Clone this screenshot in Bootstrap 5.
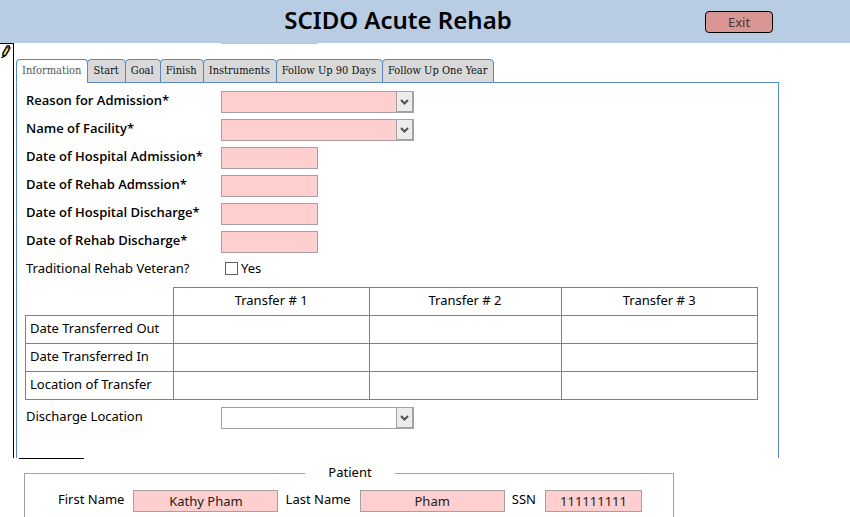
<!DOCTYPE html>
<html lang="en">
<head>
<meta charset="utf-8">
<meta name="viewport" content="width=device-width, initial-scale=1">
<title>SCIDO Acute Rehab</title>
<link href="https://cdn.jsdelivr.net/npm/bootstrap@5.3.0/dist/css/bootstrap.min.css" rel="stylesheet">
<style>
  :root { --line: #5b88bd; --field-line: #a6a0a2; --pink: #ffcfcf; }
  body { font-family: "Noto Sans", "Open Sans", sans-serif; font-size: 13px; line-height: 18px; color: #000; }
  .app-bar { background: #b8cce4; min-height: 43px; padding-left: 91px; padding-right: 77px; }
  .app-title { font-size: 24px; line-height: 36px; font-weight: 600; color: #000; padding-bottom: 4px; }
  .exit-btn { width: 68px; padding: 0; border: 1px solid #000; border-radius: 4px; background: #d99694; color: #4c3534; font-size: 13px; line-height: 20px; }
  .record-strip { width: 14px; border: solid #000; border-width: 1px 1px 0 0; }
  .form-area { padding: 0 71px 0 2px; }
  .scrolled-field { width: 97px; height: 1px; margin: 0 0 15px 205px; background: #d3bcc8; }
  .form-tabs { border: 0; margin-bottom: -1px; }
  .form-tabs .nav-item + .nav-item { margin-left: -1px; }
  .form-tabs .nav-link { height: 24px; margin: 0; padding: 0 6px 0 5px; border: 1px solid var(--line); border-radius: 4px 4px 0 0; background: #d9d9d9; color: #111; font-family: "DejaVu Serif Condensed", "DejaVu Serif", serif; font-size: 11px; line-height: 22px; }
  .form-tabs .nav-link.active { background: #fff; color: #555; border-color: var(--line) var(--line) #fff; }
  .form-panel { border: solid var(--line); border-width: 1px 1px 0; padding: 8px 20px 29px 8px; }
  .field-row { display: grid; grid-template-columns: 195px 1fr; align-items: start; padding-left: 1px; margin-bottom: 6px; min-height: 22px; }
  .field-row .req { font-family: "Open Sans", "Noto Sans", sans-serif; font-weight: 600; }
  .entry { height: 22px; padding: 0 4px; border: 1px solid var(--field-line); border-radius: 0; background: #fff; color: #222; font-size: 13px; line-height: 18px; }
  .entry:focus { box-shadow: none; }
  .entry.pink, .entry.pink:focus { background: var(--pink); }
  .entry-short { width: 97px; }
  .entry-name { width: 145px; }
  .pick { width: 193px; }
  .pick select { appearance: none; }
  .pick svg { top: 0; right: 0; pointer-events: none; }
  .tick { appearance: none; width: 13px; height: 13px; margin: 3px 3px 0 4px; border: 1px solid #606060; background: #fff; }
  .tick:checked { background: #606060; }
  .transfers { width: 100%; table-layout: fixed; border-collapse: separate; border-spacing: 0; margin-bottom: 7px; }
  .transfers th, .transfers td { height: 28px; padding: 0 4px 4px; border: solid var(--line); border-width: 0 1px 1px 0; font-weight: 400; }
  .transfers thead th { height: 29px; border-top-width: 1px; }
  .transfers tbody th { border-left-width: 1px; }
  .panel-foot { width: 65px; height: 1px; margin-left: 19px; background: #000; }
  .patient { margin: 5px 176px 0 24px; padding: 0 31px 0 33px; border: 1px solid #a0a0a0; border-bottom: 0; }
  .patient legend { padding: 0 23px 2px; font-size: 13px; line-height: 16px; }
  .name-pair { gap: 9px; }
</style>
</head>
<body class="d-flex flex-column min-vh-100 bg-white">
<header class="app-bar d-flex align-items-center">
  <h1 class="app-title flex-grow-1 text-center mb-0">SCIDO Acute Rehab</h1>
  <button type="button" class="btn exit-btn">Exit</button>
</header>

<main class="d-flex">
  <div class="record-strip flex-shrink-0">
    <svg class="d-block" width="12" height="16" viewBox="0 0 12 16" aria-hidden="true">
      <path d="M3 9 L7 2 L9 2 L10 4 L6 11 L3 13 Z" fill="#d8d060" stroke="#000" stroke-width="1.4"/>
      <path d="M6.500 2.500 L9.500 5" stroke="#803030" stroke-width="1.600"/>
      <path d="M1 13h1v1h-1z M3 11h2v2h-2z"/>
    </svg>
  </div>
  <div class="form-area flex-grow-1">
    <div class="scrolled-field"></div>
    <ul class="nav nav-tabs form-tabs" role="tablist">
      <li class="nav-item"><button type="button" class="nav-link active" role="tab" aria-selected="true">Information</button></li>
      <li class="nav-item"><button type="button" class="nav-link" role="tab">Start</button></li>
      <li class="nav-item"><button type="button" class="nav-link" role="tab">Goal</button></li>
      <li class="nav-item"><button type="button" class="nav-link" role="tab">Finish</button></li>
      <li class="nav-item"><button type="button" class="nav-link" role="tab">Instruments</button></li>
      <li class="nav-item"><button type="button" class="nav-link" role="tab">Follow Up 90 Days</button></li>
      <li class="nav-item"><button type="button" class="nav-link" role="tab">Follow Up One Year</button></li>
    </ul>
    <div class="form-panel">
      <div class="field-row">
        <label class="req" for="reason">Reason for Admission*</label>
        <div class="pick position-relative">
          <select id="reason" class="entry pink d-block w-100"><option></option></select>
          <svg class="position-absolute" width="18" height="22" viewBox="0 0 18 22" aria-hidden="true"><path d="M.5.5h16.500v20.500h-16.500z" fill="#ececec" stroke="#a3a3a3"/><path d="M17 0v22M0 21h18" stroke="#a3a3a3" stroke-width="2"/><path d="M5 9l3.500 3.500L12 9" fill="none" stroke="#505050" stroke-width="2"/></svg>
        </div>
      </div>
      <div class="field-row">
        <label class="req" for="facility">Name of Facility*</label>
        <div class="pick position-relative">
          <select id="facility" class="entry pink d-block w-100"><option></option></select>
          <svg class="position-absolute" width="18" height="22" viewBox="0 0 18 22" aria-hidden="true"><path d="M.5.5h16.500v20.500h-16.500z" fill="#ececec" stroke="#a3a3a3"/><path d="M17 0v22M0 21h18" stroke="#a3a3a3" stroke-width="2"/><path d="M5 9l3.500 3.500L12 9" fill="none" stroke="#505050" stroke-width="2"/></svg>
        </div>
      </div>
      <div class="field-row"><label class="req" for="hadm">Date of Hospital Admission*</label><input id="hadm" type="text" class="entry pink entry-short"></div>
      <div class="field-row"><label class="req" for="radm">Date of Rehab Admssion*</label><input id="radm" type="text" class="entry pink entry-short"></div>
      <div class="field-row"><label class="req" for="hdis">Date of Hospital Discharge*</label><input id="hdis" type="text" class="entry pink entry-short"></div>
      <div class="field-row"><label class="req" for="rdis">Date of Rehab Discharge*</label><input id="rdis" type="text" class="entry pink entry-short"></div>
      <div class="field-row">
        <span>Traditional Rehab Veteran?</span>
        <div class="d-flex"><input id="veteran" type="checkbox" class="tick flex-shrink-0"><label for="veteran">Yes</label></div>
      </div>

      <table class="transfers">
        <colgroup><col style="width:20.3%"><col style="width:26.7%"><col style="width:26.2%"><col style="width:26.8%"></colgroup>
        <thead>
          <tr><td></td><th scope="col" class="text-center">Transfer # 1</th><th scope="col" class="text-center">Transfer # 2</th><th scope="col" class="text-center">Transfer # 3</th></tr>
        </thead>
        <tbody>
          <tr><th scope="row">Date Transferred Out</th><td></td><td></td><td></td></tr>
          <tr><th scope="row">Date Transferred In</th><td></td><td></td><td></td></tr>
          <tr><th scope="row">Location of Transfer</th><td></td><td></td><td></td></tr>
        </tbody>
      </table>

      <div class="field-row mb-0">
        <label for="dloc">Discharge Location</label>
        <div class="pick position-relative">
          <select id="dloc" class="entry d-block w-100"><option></option></select>
          <svg class="position-absolute" width="18" height="22" viewBox="0 0 18 22" aria-hidden="true"><path d="M.5.5h16.500v20.500h-16.500z" fill="#ececec" stroke="#a3a3a3"/><path d="M17 0v22M0 21h18" stroke="#a3a3a3" stroke-width="2"/><path d="M5 9l3.500 3.500L12 9" fill="none" stroke="#505050" stroke-width="2"/></svg>
        </div>
      </div>
    </div>
  </div>
</main>
<div class="panel-foot"></div>

<fieldset class="patient flex-grow-1">
  <legend class="float-none w-auto mx-auto mb-2">Patient</legend>
  <div class="d-flex justify-content-between align-items-start">
    <div class="name-pair d-flex"><label for="first">First Name</label><input id="first" type="text" class="entry pink entry-name text-center" value="Kathy Pham"></div>
    <div class="name-pair d-flex"><label for="last">Last Name</label><input id="last" type="text" class="entry pink entry-name text-center" value="Pham"></div>
    <div class="name-pair d-flex"><label for="ssn">SSN</label><input id="ssn" type="text" class="entry pink entry-short text-center" value="111111111"></div>
  </div>
</fieldset>
<script src="https://cdn.jsdelivr.net/npm/bootstrap@5.3.0/dist/js/bootstrap.bundle.min.js"></script>
</body>
</html>
